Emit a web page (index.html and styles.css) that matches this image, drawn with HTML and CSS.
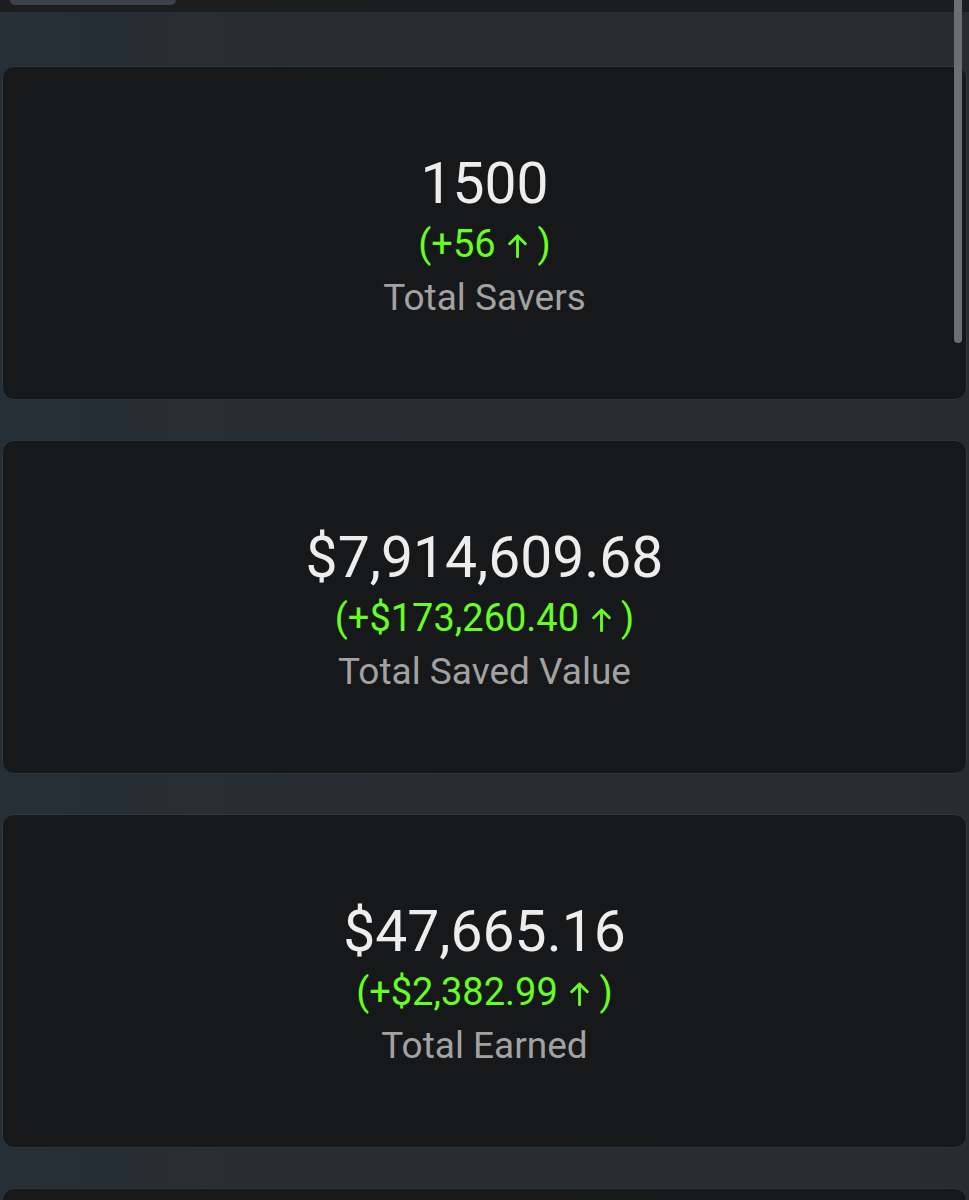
FILE: index.html
```html
<!DOCTYPE html>
<html>
<head>
<meta charset="utf-8">
<link rel="stylesheet" href="styles.css">
</head>
<body>
<div class="topbar"><div class="tab-pill"></div></div>
<main class="stats">
  <section class="card">
    <div class="value">1500</div>
    <div class="change">(+56 <svg class="arrow" viewBox="0 0 16 20"><path d="M8 19V1.6M1.4 8.2L8 1.6L14.6 8.2"/></svg> )</div>
    <div class="label">Total Savers</div>
  </section>
  <section class="card">
    <div class="value">$7,914,609.68</div>
    <div class="change">(+$173,260.40 <svg class="arrow" viewBox="0 0 16 20"><path d="M8 19V1.6M1.4 8.2L8 1.6L14.6 8.2"/></svg> )</div>
    <div class="label">Total Saved Value</div>
  </section>
  <section class="card">
    <div class="value">$47,665.16</div>
    <div class="change">(+$2,382.99 <svg class="arrow" viewBox="0 0 16 20"><path d="M8 19V1.6M1.4 8.2L8 1.6L14.6 8.2"/></svg> )</div>
    <div class="label">Total Earned</div>
  </section>
  <section class="card"></section>
</main>
<div class="scrollbar"></div>
</body>
</html>
```
FILE: styles.css
```css
html, body {
  margin: 0;
  padding: 0;
}
body {
  background: linear-gradient(90deg, #262f36 0%, #282d31 50%, #292c2f 100%);
  font-family: Roboto, "Open Sans", sans-serif;
  min-height: 1200px;
  overflow: hidden;
}
.topbar {
  height: 13px;
  background: #1c1d1f;
  border-bottom: 1px solid #2a3036;
  box-sizing: border-box;
  padding-left: 10px;
}
.tab-pill {
  width: 166px;
  height: 5px;
  background: #3c4247;
  border-radius: 0 0 8px 8px;
}
.stats {
  display: flex;
  flex-direction: column;
  gap: 40px;
  padding: 53px 2px 0 2px;
}
.card {
  height: 334px;
  box-sizing: border-box;
  background: #17181a;
  border: 1px solid #2c3841;
  border-radius: 12px;
  display: flex;
  flex-direction: column;
  align-items: center;
  justify-content: center;
  padding-top: 10px;
}
.value {
  font-size: 57px;
  line-height: 64px;
  color: #ededed;
}
.change {
  font-size: 38px;
  line-height: 56px;
  color: #66ff1f;
  display: flex;
  align-items: center;
  white-space: pre;
}
.arrow {
  width: 19px;
  height: 24px;
  margin: 4px 1px 0 3px;
  fill: none;
  stroke: #66ff1f;
  stroke-width: 2.4;
  stroke-linecap: round;
  stroke-linejoin: round;
}
.label {
  font-size: 37px;
  line-height: 52px;
  color: #a2a2a2;
}
.scrollbar {
  position: fixed;
  top: 0;
  left: 954px;
  width: 8px;
  height: 343px;
  background: #6c6e70;
  border-radius: 0 0 4px 4px;
}
```
